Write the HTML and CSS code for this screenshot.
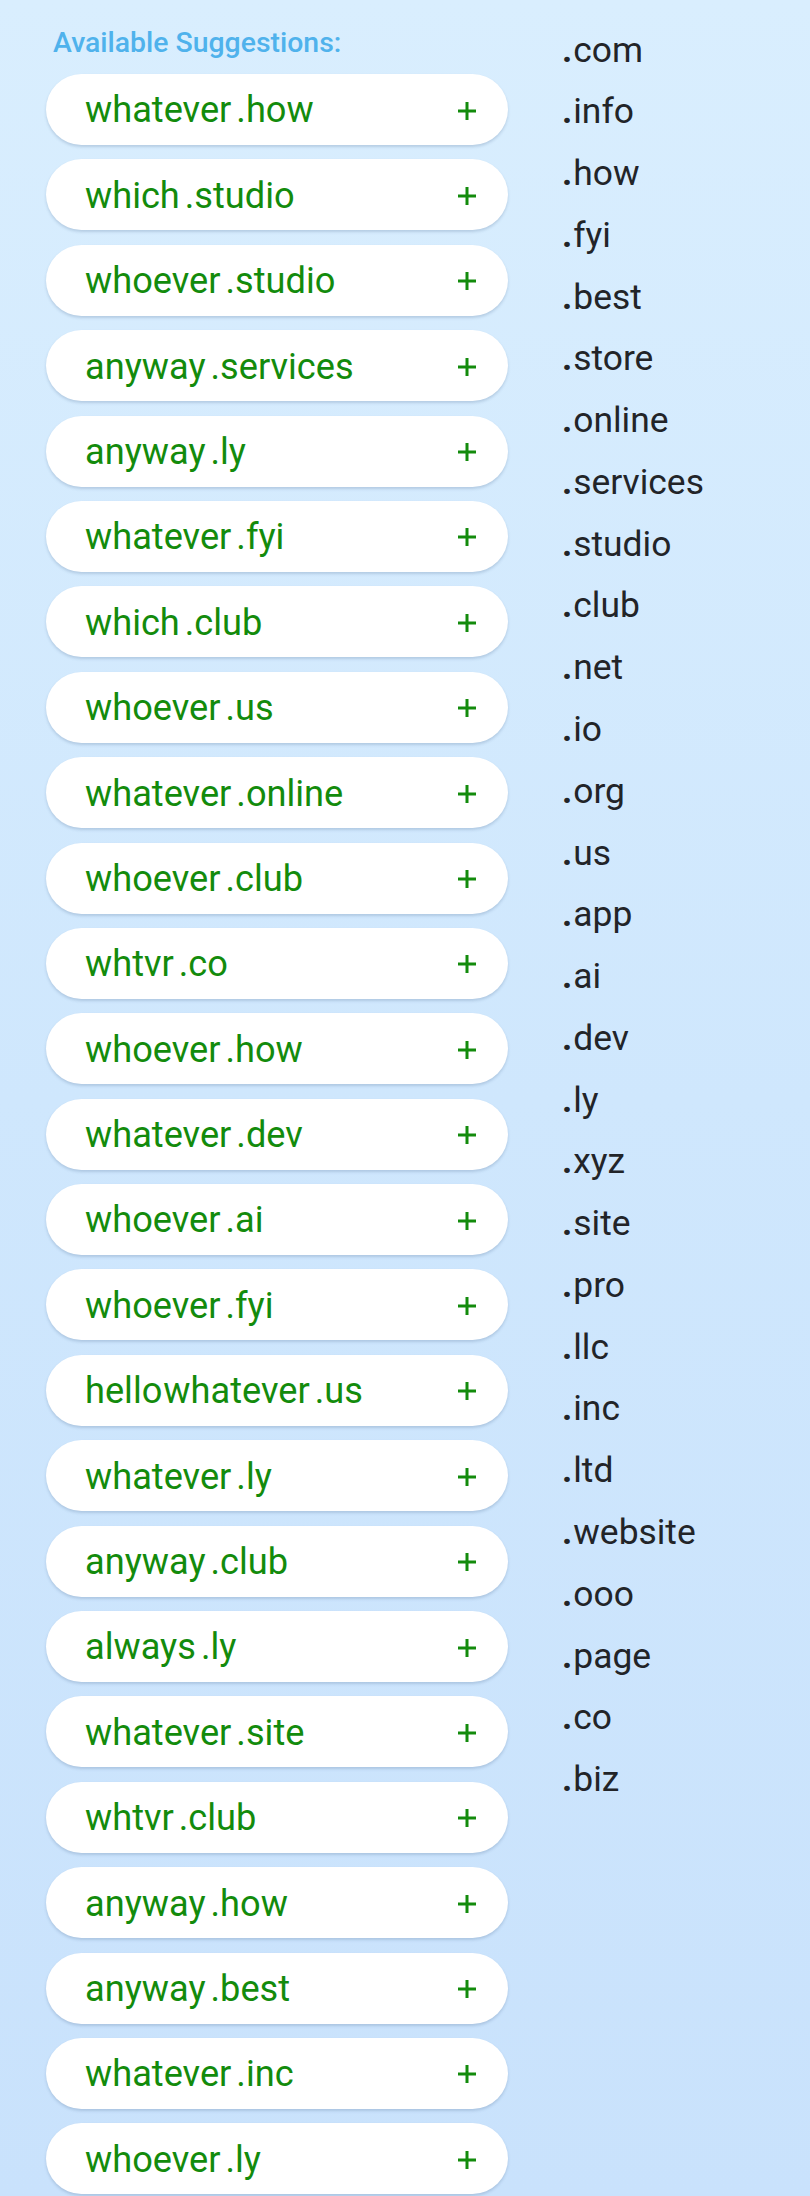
FILE: index.html
```html
<!DOCTYPE html>
<html lang="en">
<head>
<meta charset="utf-8">
<title>Domain Suggestions</title>
<link rel="stylesheet" href="styles.css">
</head>
<body>
<div class="page">
  <section class="suggestions">
    <h2 class="label">Available Suggestions:</h2>
    <ul class="pill-list">
      <li class="pill"><span class="name">whatever<span class="tld">.how</span></span><svg class="plus" viewBox="0 0 18 18"><path d="M9 0V18M0 9H18"/></svg></li>
      <li class="pill"><span class="name">which<span class="tld">.studio</span></span><svg class="plus" viewBox="0 0 18 18"><path d="M9 0V18M0 9H18"/></svg></li>
      <li class="pill"><span class="name">whoever<span class="tld">.studio</span></span><svg class="plus" viewBox="0 0 18 18"><path d="M9 0V18M0 9H18"/></svg></li>
      <li class="pill"><span class="name">anyway<span class="tld">.services</span></span><svg class="plus" viewBox="0 0 18 18"><path d="M9 0V18M0 9H18"/></svg></li>
      <li class="pill"><span class="name">anyway<span class="tld">.ly</span></span><svg class="plus" viewBox="0 0 18 18"><path d="M9 0V18M0 9H18"/></svg></li>
      <li class="pill"><span class="name">whatever<span class="tld">.fyi</span></span><svg class="plus" viewBox="0 0 18 18"><path d="M9 0V18M0 9H18"/></svg></li>
      <li class="pill"><span class="name">which<span class="tld">.club</span></span><svg class="plus" viewBox="0 0 18 18"><path d="M9 0V18M0 9H18"/></svg></li>
      <li class="pill"><span class="name">whoever<span class="tld">.us</span></span><svg class="plus" viewBox="0 0 18 18"><path d="M9 0V18M0 9H18"/></svg></li>
      <li class="pill"><span class="name">whatever<span class="tld">.online</span></span><svg class="plus" viewBox="0 0 18 18"><path d="M9 0V18M0 9H18"/></svg></li>
      <li class="pill"><span class="name">whoever<span class="tld">.club</span></span><svg class="plus" viewBox="0 0 18 18"><path d="M9 0V18M0 9H18"/></svg></li>
      <li class="pill"><span class="name">whtvr<span class="tld">.co</span></span><svg class="plus" viewBox="0 0 18 18"><path d="M9 0V18M0 9H18"/></svg></li>
      <li class="pill"><span class="name">whoever<span class="tld">.how</span></span><svg class="plus" viewBox="0 0 18 18"><path d="M9 0V18M0 9H18"/></svg></li>
      <li class="pill"><span class="name">whatever<span class="tld">.dev</span></span><svg class="plus" viewBox="0 0 18 18"><path d="M9 0V18M0 9H18"/></svg></li>
      <li class="pill"><span class="name">whoever<span class="tld">.ai</span></span><svg class="plus" viewBox="0 0 18 18"><path d="M9 0V18M0 9H18"/></svg></li>
      <li class="pill"><span class="name">whoever<span class="tld">.fyi</span></span><svg class="plus" viewBox="0 0 18 18"><path d="M9 0V18M0 9H18"/></svg></li>
      <li class="pill"><span class="name">hello<span class="word">whatever</span><span class="tld">.us</span></span><svg class="plus" viewBox="0 0 18 18"><path d="M9 0V18M0 9H18"/></svg></li>
      <li class="pill"><span class="name">whatever<span class="tld">.ly</span></span><svg class="plus" viewBox="0 0 18 18"><path d="M9 0V18M0 9H18"/></svg></li>
      <li class="pill"><span class="name">anyway<span class="tld">.club</span></span><svg class="plus" viewBox="0 0 18 18"><path d="M9 0V18M0 9H18"/></svg></li>
      <li class="pill"><span class="name">always<span class="tld">.ly</span></span><svg class="plus" viewBox="0 0 18 18"><path d="M9 0V18M0 9H18"/></svg></li>
      <li class="pill"><span class="name">whatever<span class="tld">.site</span></span><svg class="plus" viewBox="0 0 18 18"><path d="M9 0V18M0 9H18"/></svg></li>
      <li class="pill"><span class="name">whtvr<span class="tld">.club</span></span><svg class="plus" viewBox="0 0 18 18"><path d="M9 0V18M0 9H18"/></svg></li>
      <li class="pill"><span class="name">anyway<span class="tld">.how</span></span><svg class="plus" viewBox="0 0 18 18"><path d="M9 0V18M0 9H18"/></svg></li>
      <li class="pill"><span class="name">anyway<span class="tld">.best</span></span><svg class="plus" viewBox="0 0 18 18"><path d="M9 0V18M0 9H18"/></svg></li>
      <li class="pill"><span class="name">whatever<span class="tld">.inc</span></span><svg class="plus" viewBox="0 0 18 18"><path d="M9 0V18M0 9H18"/></svg></li>
      <li class="pill"><span class="name">whoever<span class="tld">.ly</span></span><svg class="plus" viewBox="0 0 18 18"><path d="M9 0V18M0 9H18"/></svg></li>
    </ul>
  </section>
  <aside class="tlds">
    <ul class="tld-list">
      <li><b class="dot">.</b>com</li><li><b class="dot">.</b>info</li><li><b class="dot">.</b>how</li><li><b class="dot">.</b>fyi</li><li><b class="dot">.</b>best</li><li><b class="dot">.</b>store</li><li><b class="dot">.</b>online</li><li><b class="dot">.</b>services</li><li><b class="dot">.</b>studio</li><li><b class="dot">.</b>club</li><li><b class="dot">.</b>net</li><li><b class="dot">.</b>io</li><li><b class="dot">.</b>org</li><li><b class="dot">.</b>us</li><li><b class="dot">.</b>app</li><li><b class="dot">.</b>ai</li><li><b class="dot">.</b>dev</li><li><b class="dot">.</b>ly</li><li><b class="dot">.</b>xyz</li><li><b class="dot">.</b>site</li><li><b class="dot">.</b>pro</li><li><b class="dot">.</b>llc</li><li><b class="dot">.</b>inc</li><li><b class="dot">.</b>ltd</li><li><b class="dot">.</b>website</li><li><b class="dot">.</b>ooo</li><li><b class="dot">.</b>page</li><li><b class="dot">.</b>co</li><li><b class="dot">.</b>biz</li>
    </ul>
  </aside>
</div>
</body>
</html>
```

FILE: styles.css
```css
html, body {
  margin: 0;
  padding: 0;
}

body {
  height: 2196px;
  overflow: hidden;
  background: linear-gradient(180deg, #d9eefe 0%, #cfe7fd 50%, #c9e2fc 100%);
  font-family: Roboto, "Noto Sans", sans-serif;
}

.page {
  display: flex;
  align-items: flex-start;
}

.suggestions {
  margin-left: 46px;
  width: 462px;
}

.label {
  margin: 0 0 14px 7px;
  padding-top: 26px;
  height: 34px;
  line-height: 34px;
  font-size: 28.4px;
  font-weight: 500;
  color: #4fb2ec;
}

.pill-list {
  list-style: none;
  margin: 0;
  padding: 0;
  display: flex;
  flex-direction: column;
  gap: 14.4px;
}

.pill {
  height: 71px;
  box-sizing: border-box;
  padding: 0 32px 0 39px;
  display: flex;
  align-items: center;
  justify-content: space-between;
  background: #ffffff;
  border-radius: 36px;
  box-shadow: 0 2px 3px rgba(60, 90, 130, 0.22);
}

.name {
  font-size: 36.2px;
  color: #138b0c;
  line-height: 1;
  margin-top: 2px;
}

.tld {
  margin-left: 5px;
}

.word {
  margin-left: 1px;
}

.plus {
  width: 18px;
  height: 18px;
  margin-top: 2px;
  stroke: #138b0c;
  stroke-width: 3;
  fill: none;
}

.tlds {
  margin-left: 54px;
  padding-top: 19.6px;
}

.tld-list {
  list-style: none;
  margin: 0;
  padding: 0;
  font-size: 35.4px;
  line-height: 61.76px;
  color: #222428;
}

.dot {
  font-weight: 700;
  margin-right: 1px;
}
```
